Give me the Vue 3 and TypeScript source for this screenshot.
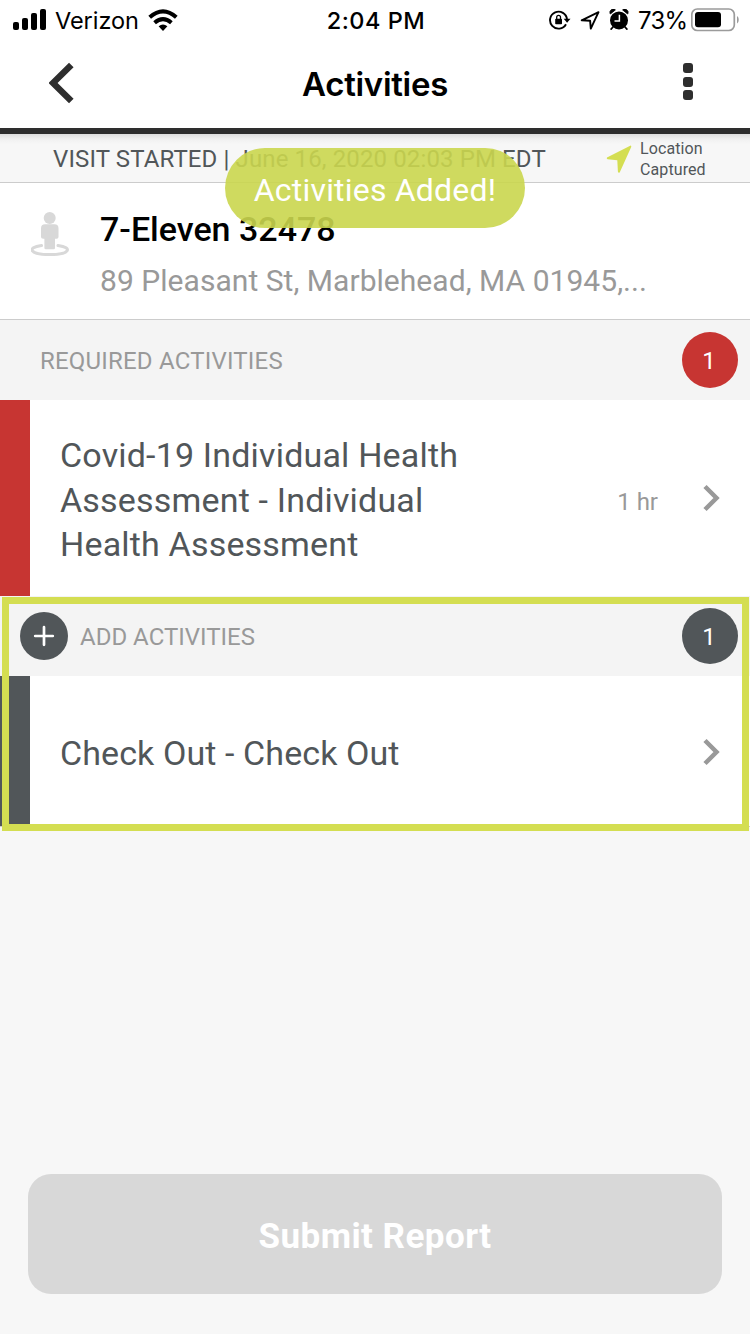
<script setup lang="ts">
interface Activity {
  title: string
  duration?: string
}

const store = {
  name: '7-Eleven 32478',
  address: '89 Pleasant St, Marblehead, MA 01945,...',
}
const required: Activity[] = [
  { title: 'Covid-19 Individual Health Assessment - Individual Health Assessment', duration: '1 hr' },
]
const additional: Activity[] = [{ title: 'Check Out - Check Out' }]
</script>

<template>
  <div class="screen">
    <div class="status">
      <div class="status-left">
        <svg class="signal" width="34" height="22" viewBox="0 0 34 22">
          <rect x="0" y="14" width="6" height="8" rx="2" />
          <rect x="9" y="10" width="6" height="12" rx="2" />
          <rect x="18" y="5" width="6" height="17" rx="2" />
          <rect x="27" y="1" width="6" height="21" rx="2" />
        </svg>
        <span class="carrier">Verizon</span>
        <svg class="wifi" width="30" height="23" viewBox="0 0 30 23">
          <path d="M1.7 8.3Q15-3.6 28.3 8.3" fill="none" stroke="#000" stroke-width="4" />
          <path d="M6.6 13.8Q15 6.6 23.4 13.8" fill="none" stroke="#000" stroke-width="4" />
          <path d="M10.6 17.3Q15 13.6 19.4 17.3L15 22Z" />
        </svg>
      </div>
      <span class="time">2:04 PM</span>
      <div class="status-right">
        <svg class="lock" width="22" height="22" viewBox="0 0 22 22">
          <path d="M17 15.2A8.5 8.5 0 1 1 18 10.5" fill="none" stroke="#000" stroke-width="1.9" />
          <path d="M14.7 9.7h6.8L18.1 13.7Z" />
          <rect x="6.2" y="9.8" width="6.8" height="5.4" rx=".8" />
          <path d="M7.7 10.5V8.3a1.9 1.9 0 0 1 3.8 0V10.5" fill="none" stroke="#000" stroke-width="1.3" />
        </svg>
        <svg class="nav-arrow" width="20" height="20" viewBox="0 0 20 20">
          <path d="M1.7 10.3 18.5 2.2 10.8 18.6 10.1 10.7Z" fill="none" stroke="#000" stroke-width="1.9" stroke-linejoin="round" />
        </svg>
        <svg class="alarm" width="20" height="21" viewBox="0 0 20 21">
          <circle cx="10" cy="11.4" r="9" />
          <path d="M1.1 4.5A3.3 3.3 0 0 1 6.4.9L1.4 5ZM18.9 4.5A3.3 3.3 0 0 0 13.6.9L18.6 5Z" stroke="#000" stroke-width=".8" />
          <path d="M4 18 2.1 20.1M16 18l1.9 2.1" stroke="#000" stroke-width="1.7" stroke-linecap="round" />
          <path d="M10.4 5.8V12H5.5" fill="none" stroke="#fff" stroke-width="1.5" />
        </svg>
        <span class="percent">73%</span>
        <svg class="battery" width="48" height="24" viewBox="0 0 48 24">
          <rect x=".8" y="1" width="42.5" height="21.5" rx="5.5" fill="none" stroke="#9b9b9b" stroke-width="1.7" />
          <rect x="4" y="4" width="26" height="15.3" rx="3" />
          <path d="M46 8v7.5c2.3-1.5 2.3-6 0-7.5Z" fill="#9b9b9b" />
        </svg>
      </div>
    </div>

    <header class="header">
      <svg class="back" width="26" height="42" viewBox="0 0 26 42">
        <path d="M22.3 3 4 21l18.3 18" fill="none" stroke="#2e2e2e" stroke-width="6.5" />
      </svg>
      <h1>Activities</h1>
      <div class="dots"><i /><i /><i /></div>
    </header>

    <div class="visit">
      <span class="visit-text">VISIT STARTED | June 16, 2020 02:03 PM EDT</span>
      <svg class="loc" width="26" height="29" viewBox="0 0 26 29">
        <path d="M24.7.5 1 12.6Q.2 13.8 1.6 14.2L11.3 15.2 11.9 26.6Q12.5 28.6 13.8 27.2L25.2 2Q25.5.6 24.7.5Z" fill="#d4de52" />
      </svg>
      <span class="loc-text">Location<br>Captured</span>
    </div>

    <section class="store">
      <svg class="person" width="38" height="44" viewBox="0 0 38 44" fill="#d8d8d8">
        <circle cx="18.7" cy="6" r="6" />
        <path d="M14 12.3h9.5q4 0 4 4v8.7q0 1.8-1.8 1.8h-1.7V36q0 1.3-1.3 1.3h-8q-1.3 0-1.3-1.3v-9.2h-1.2q-2.2 0-2.2-1.8v-8.7q0-4 4-4Z" />
        <path d="M10.5 33.5C-5 35.7-1 42.6 18.7 42.6S42.5 35.7 27 33.5" fill="none" stroke="#d8d8d8" stroke-width="3" stroke-linecap="round" />
      </svg>
      <div class="store-info">
        <h2>{{ store.name }}</h2>
        <p>{{ store.address }}</p>
      </div>
    </section>

    <section>
      <div class="section-head">
        <span class="section-title spaced">REQUIRED ACTIVITIES</span>
        <span class="count red">{{ required.length }}</span>
      </div>
      <div v-for="a in required" :key="a.title" class="item tall">
        <div class="bar red" />
        <div class="title">{{ a.title }}</div>
        <div class="duration">{{ a.duration }}</div>
        <svg class="chevron" width="18" height="28" viewBox="0 0 18 28">
          <path d="M2 2.5 13.5 14 2 25.5" fill="none" stroke="#999" stroke-width="4.5" />
        </svg>
      </div>
    </section>

    <section class="additional">
      <div class="section-head add-head">
        <svg class="plus" width="48" height="48" viewBox="0 0 48 48">
          <circle cx="24" cy="24" r="24" fill="#515659" />
          <path d="M15.2 24h17.6M24 15.2v17.6" stroke="#fff" stroke-width="2.7" stroke-linecap="round" />
        </svg>
        <span class="section-title">ADD ACTIVITIES</span>
        <span class="count">{{ additional.length }}</span>
      </div>
      <div v-for="a in additional" :key="a.title" class="item">
        <div class="bar" />
        <div class="title">{{ a.title }}</div>
        <svg class="chevron" width="18" height="28" viewBox="0 0 18 28">
          <path d="M2 2.5 13.5 14 2 25.5" fill="none" stroke="#999" stroke-width="4.5" />
        </svg>
      </div>
      <div class="highlight" />
    </section>

    <button class="submit">Submit Report</button>
    <div class="toast">Activities Added!</div>
  </div>
</template>

<style>
body {
  margin: 0;
  background: #f7f7f7;
}
</style>

<style scoped>
.screen {
  position: relative;
  display: flex;
  flex-direction: column;
  width: 750px;
  height: 1334px;
  overflow: hidden;
  background: #f7f7f7;
  font-family: Roboto, "Liberation Sans", sans-serif;
  color: #515659;
}
.screen * {
  box-sizing: border-box;
  white-space: nowrap;
}
svg {
  display: block;
  flex: none;
}
.status {
  display: grid;
  grid-template-columns: 1fr auto 1fr;
  align-items: center;
  height: 40px;
  padding: 0 11px 0 13px;
  background: #fff;
  color: #000;
  font-family: Inter, sans-serif;
}
.status-left,
.status-right {
  display: flex;
  align-items: center;
}
.status-right {
  justify-content: flex-end;
}
.signal {
  margin-bottom: 2px;
}
.carrier {
  margin-left: 8px;
  width: 84px;
  font-size: 23.5px;
  letter-spacing: -0.05px;
}
.wifi {
  margin-left: 9px;
}
.time {
  padding-top: 1px;
  font-size: 23.5px;
  font-weight: 550;
  letter-spacing: 0.5px;
}
.nav-arrow {
  margin-left: 9px;
}
.alarm {
  margin: 0 9px 2px 9px;
}
.percent {
  width: 48px;
  font-size: 24px;
  letter-spacing: -0.7px;
}
.battery {
  margin-left: 5px;
}
.header {
  display: flex;
  justify-content: space-between;
  align-items: center;
  height: 94px;
  padding: 0 57px 2px 49px;
  background: #fff;
  border-bottom: 6px solid #2e2e2e;
  color: #000;
}
h1,
h2,
p {
  margin: 0;
}
h1 {
  margin-left: -8px;
  padding-top: 2px;
  font: 600 33px/40px Inter, sans-serif;
  letter-spacing: -0.3px;
}
.dots {
  display: flex;
  flex-direction: column;
  gap: 3.5px;
  padding-bottom: 3px;
}
.dots i {
  width: 10px;
  height: 10px;
  border-radius: 3px;
  background: #2e2e2e;
}
.visit {
  display: flex;
  align-items: center;
  height: 49px;
  padding: 2px 0 0 53px;
  border-bottom: 1px solid #ccc;
  background: linear-gradient(#dedede, #f0f0f0 5px, #f7f7f7 10px);
}
.visit-text {
  width: 553px;
  font-size: 24px;
  letter-spacing: 0.12px;
}
.loc-text {
  margin-left: 8px;
  font-size: 16px;
  line-height: 21px;
  letter-spacing: 0.1px;
}
.store {
  display: flex;
  height: 137px;
  padding-left: 31px;
  border-bottom: 1px solid #ccc;
  background: #fff;
}
.person {
  margin-top: 29px;
}
.store-info {
  margin: 26px 0 0 31px;
}
h2 {
  color: #000;
  font-size: 34px;
  line-height: 40px;
  font-weight: 500;
}
p {
  margin-top: 12px;
  color: #999;
  font-size: 30px;
  line-height: 40px;
  letter-spacing: 0.04px;
}
.section-head {
  display: flex;
  align-items: center;
  height: 80px;
  padding: 0 12px 0 40px;
  background: #f4f4f4;
  color: #999;
}
.add-head {
  padding-left: 20px;
}
.plus {
  margin-right: 12px;
}
.section-title {
  padding-top: 2px;
  font-size: 24px;
}
.spaced {
  letter-spacing: 0.2px;
}
.count {
  display: flex;
  align-items: center;
  justify-content: center;
  width: 56px;
  height: 56px;
  margin-left: auto;
  padding: 1px 2px 0 0;
  border-radius: 50%;
  background: #515659;
  color: #fff;
  font-size: 24px;
}
.red {
  background: #c73532;
}
.item {
  display: flex;
  align-items: center;
  height: 151px;
  padding-right: 29px;
  border-bottom: 1px solid #ccc;
  background: #fff;
}
.item.tall {
  height: 196px;
  border: 0;
}
.bar {
  align-self: stretch;
  width: 30px;
  background: #515659;
}
.bar.red {
  background: #c73532;
}
.title {
  width: 430px;
  margin-left: 30px;
  padding-top: 4px;
  font-size: 34px;
  line-height: 44.5px;
  letter-spacing: 0.18px;
  white-space: normal;
}
.additional .title {
  letter-spacing: 0.1px;
}
.duration {
  margin: 7px 0 0 auto;
  color: #999;
  font-size: 24px;
}
.chevron {
  margin-left: auto;
}
.additional .chevron {
  margin-top: 1px;
}
.duration + .chevron {
  margin-left: 45px;
}
.additional {
  position: relative;
}
.highlight {
  position: absolute;
  inset: 0.5px 1.5px -3.5px 1.5px;
  border: 7px solid #d4de52;
}
.submit {
  width: 694px;
  height: 120px;
  margin: auto auto 40px;
  padding: 5px 0 0;
  border: 0;
  border-radius: 23px;
  background: #d8d8d8;
  color: #fff;
  font: 700 35px/40px Roboto, sans-serif;
  letter-spacing: 0.45px;
}
.toast {
  position: absolute;
  top: 148px;
  left: 225px;
  width: 300px;
  height: 80px;
  padding-top: 2px;
  border-radius: 40px;
  background: rgba(202, 214, 78, 0.9);
  color: #fff;
  font-size: 32px;
  line-height: 80px;
  letter-spacing: 0.2px;
  text-align: center;
}
</style>
